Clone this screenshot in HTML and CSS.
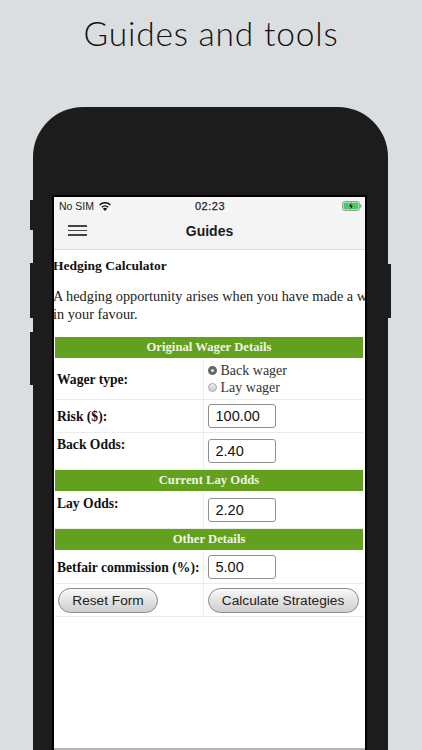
FILE: index.html
```html
<!DOCTYPE html>
<html lang="en">
<head>
  <meta charset="UTF-8">
  <meta name="viewport" content="width=device-width, initial-scale=1">
  <title>Guides and tools</title>
  <link rel="stylesheet" href="styles.css">
</head>
<body>

<h1 class="headline">Guides and tools</h1>

<div class="phone">
  <span class="side-btn mute"></span>
  <span class="side-btn vol-up"></span>
  <span class="side-btn vol-down"></span>
  <span class="side-btn power"></span>

  <div class="screen">
    <div class="status-bar">
      <div class="status-left">
        No SIM
        <svg class="wifi" width="14" height="10" viewBox="0 0 14 10">
          <path d="M7 10 L4.9 7.7 A3 3 0 0 1 9.1 7.7 Z" fill="#111"/>
          <path d="M3.7 6.3 A4.8 4.8 0 0 1 10.3 6.3" fill="none" stroke="#111" stroke-width="1.5"/>
          <path d="M1.6 4 A7.8 7.8 0 0 1 12.4 4" fill="none" stroke="#111" stroke-width="1.5"/>
        </svg>
      </div>
      <div class="status-time">02:23</div>
      <svg class="battery" width="20" height="10" viewBox="0 0 20 10">
        <rect x="0.5" y="0.5" width="17" height="9" rx="2" fill="#fff" stroke="#9a9a9a"/>
        <rect x="1.5" y="1.5" width="15" height="7" rx="1" fill="#3fce62"/>
        <rect x="18" y="3.5" width="1.5" height="3" fill="#9a9a9a"/>
        <path d="M9.8 1 L6.8 5.6 H8.8 L8 9 L11.2 4.4 H9.2 Z" fill="#111" stroke="#dff3e2" stroke-width="0.7" paint-order="stroke"/>
      </svg>
    </div>

    <div class="nav-bar">
      <div class="menu-icon"><span></span><span></span><span></span></div>
      <div class="nav-title">Guides</div>
    </div>

    <div class="content">
      <h2 class="page-title">Hedging Calculator</h2>
      <p class="intro">A hedging opportunity arises when you have made a wager<br>in your favour.</p>

      <table class="calc">
        <colgroup>
          <col class="col-label">
          <col class="col-field">
        </colgroup>
        <tr><th colspan="2" class="band">Original Wager Details</th></tr>
        <tr class="row-wager">
          <td class="label mid">Wager type:</td>
          <td class="radios">
            <div class="radio-line"><span class="radio checked"></span>Back wager</div>
            <div class="radio-line"><span class="radio"></span>Lay wager</div>
          </td>
        </tr>
        <tr class="row-risk">
          <td class="label mid">Risk ($):</td>
          <td><div class="input">100.00</div></td>
        </tr>
        <tr class="row-tall">
          <td class="label">Back Odds:</td>
          <td><div class="input">2.40</div></td>
        </tr>
        <tr><th colspan="2" class="band">Current Lay Odds</th></tr>
        <tr class="row-tall">
          <td class="label">Lay Odds:</td>
          <td><div class="input">2.20</div></td>
        </tr>
        <tr><th colspan="2" class="band">Other Details</th></tr>
        <tr class="row-risk">
          <td class="label mid">Betfair commission (%):</td>
          <td><div class="input">5.00</div></td>
        </tr>
        <tr class="row-risk">
          <td><button class="btn reset">Reset Form</button></td>
          <td><button class="btn calc-btn">Calculate Strategies</button></td>
        </tr>
      </table>
    </div>
  </div>
</div>

</body>
</html>
```

FILE: styles.css
```css
/* page */
html, body {
  height: 100%;
}

body {
  margin: 0;
  height: 750px;
  overflow: hidden;
  background-color: #dbdee1;
  font-family: 'Liberation Serif', serif;
  color: #222;
}

.headline {
  margin: 0;
  padding-top: 12px;
  height: 107px;
  box-sizing: border-box;
  text-align: center;
  font-family: 'Lato', sans-serif;
  font-weight: 300;
  font-size: 33.5px;
  line-height: 42px;
  letter-spacing: 0.8px;
  color: #111;
}

/* phone */
.phone {
  position: relative;
  width: 355px;
  height: 643px;
  margin-left: 33px;
  padding: 90px 23px 0 21px;
  box-sizing: border-box;
  background-color: #1c1c1c;
  border-radius: 50px 50px 0 0;
}

.side-btn {
  position: absolute;
  width: 3px;
  background-color: #1c1c1c;
}

.mute { left: -3px; top: 93px; height: 30px; }
.vol-up { left: -3px; top: 156px; height: 55px; }
.vol-down { left: -3px; top: 225px; height: 53px; }
.power { right: -3px; top: 157px; height: 54px; }

.screen {
  width: 311px;
  height: 553px;
  overflow: hidden;
  background-color: #fff;
  box-shadow: 0 0 0 2px #000;
  border-bottom: 2px solid #b5b5b5;
  box-sizing: border-box;
}

/* status + nav */
.status-bar {
  display: flex;
  align-items: center;
  justify-content: space-between;
  height: 15px;
  padding: 1px 3px 0 5px;
  background-color: #f5f5f5;
  font-family: 'Liberation Sans', sans-serif;
  font-size: 10.5px;
  color: #222;
  position: relative;
}

.status-left {
  display: flex;
  align-items: center;
  gap: 4px;
}

.status-time {
  position: absolute;
  left: 1px;
  right: 0;
  text-align: center;
  font-size: 11px;
  letter-spacing: 0.5px;
  color: #222;
  -webkit-text-stroke: 0.25px #222;
}

.nav-bar {
  position: relative;
  height: 36px;
  background-color: #f4f4f5;
  border-bottom: 1px solid #dcdcdc;
  display: flex;
  align-items: center;
  justify-content: center;
}

.nav-title {
  font-family: 'Liberation Sans', sans-serif;
  font-size: 14px;
  font-weight: bold;
  color: #1a1a1a;
}

.menu-icon {
  position: absolute;
  left: 14px;
  top: 12px;
  display: flex;
  flex-direction: column;
  gap: 3px;
}

.menu-icon span {
  display: block;
  width: 19px;
  height: 1.5px;
  background-color: #444;
}

/* content */
.content {
  margin-left: -1px;
}

.page-title {
  margin: 0;
  padding-top: 8px;
  font-size: 13.5px;
  line-height: 15px;
  color: #111;
}

.intro {
  margin: 15px 0 0;
  white-space: nowrap;
  font-size: 14.3px;
  line-height: 17.5px;
  color: #222;
}

.calc {
  margin: 13px 0 0 2px;
  width: 308px;
  table-layout: fixed;
  border-collapse: collapse;
}

.col-label { width: 148px; }
.col-field { width: 160px; }

.calc td {
  padding: 0 0 0 4px;
  border: 1px solid #ececec;
  border-top: 0;
  box-sizing: border-box;
}

.calc td:first-child {
  padding-left: 2px;
  border-left: 0;
}

.calc td:last-child {
  border-right: 0;
}

.band {
  height: 21px;
  padding: 0;
  background-color: #62a01e;
  border-bottom: 1px solid #fff;
  border-top: 1px solid #fff;
  color: #f0f5e4;
  font-size: 12.7px;
  font-weight: bold;
  text-align: center;
}

.label {
  font-size: 13.6px;
  font-weight: bold;
  color: #111;
  vertical-align: top;
  line-height: 15px;
}

.label.mid {
  vertical-align: middle;
}

.row-wager td { height: 41px; }
.row-risk td { height: 33px; }
.row-tall td { height: 37px; }

.row-tall .label {
  padding-top: 4px;
}

.radios {
  font-size: 14px;
  line-height: 17px;
  color: #333;
}

.radio-line {
  display: flex;
  align-items: center;
  gap: 4px;
}

.radio {
  width: 7px;
  height: 7px;
  border-radius: 50%;
  border: 1px solid #aaa;
  background: linear-gradient(#eee, #ccc);
  box-sizing: content-box;
}

.radio.checked {
  width: 3px;
  height: 3px;
  border: 3px solid #666;
  background: #eee;
}

.input {
  width: 68px;
  height: 24px;
  box-sizing: border-box;
  padding-left: 7px;
  border: 1px solid #8f8f8f;
  border-radius: 3px;
  background-color: #fff;
  font-family: 'Liberation Sans', sans-serif;
  font-size: 14.5px;
  line-height: 22px;
  color: #111;
}

.btn {
  display: block;
  height: 25px;
  padding: 0;
  border: 1px solid #8c8c8c;
  border-radius: 13px;
  background: linear-gradient(#fafafa, #e4e4e4 45%, #cfcfcf);
  font-family: 'Liberation Sans', sans-serif;
  font-size: 13.7px;
  color: #222;
}

.reset { width: 100px; margin-left: 1px; }
.calc-btn { width: 151px; }
```
